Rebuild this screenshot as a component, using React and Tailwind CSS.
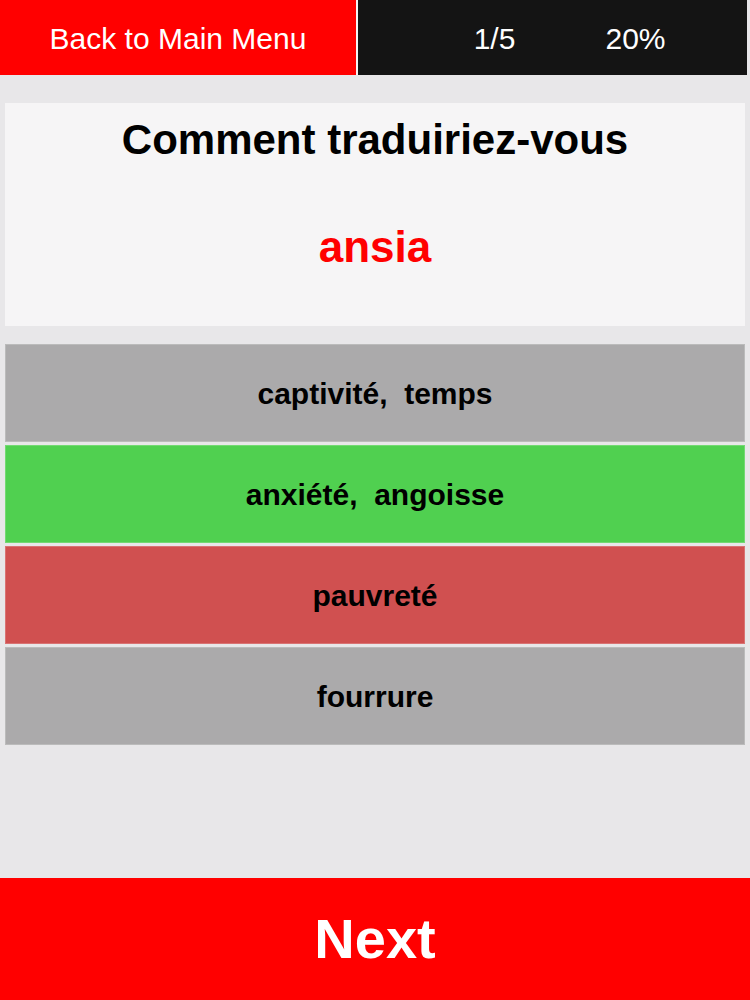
import React from 'react';

const options = [
    { label: 'captivité,  temps', color: 'bg-[#abaaab]' },
    { label: 'anxiété,  angoisse', color: 'bg-[#50d050]' },
    { label: 'pauvreté', color: 'bg-[#d05050]' },
    { label: 'fourrure', color: 'bg-[#abaaab]' },
];

export default function App() {
    return (
        <div className="w-[750px] h-[1000px] bg-[#e8e7e9] flex flex-col font-['Liberation_Sans',Arial,sans-serif]">
            {/* top bar */}
            <div className="h-[75px] flex shrink-0">
                <div className="w-[356px] bg-[#ff0000] flex items-center justify-center text-white text-[30px] pt-[2px]">
                    Back to Main Menu
                </div>
                <div className="w-[2px] bg-[#f4f4f4]" />
                <div className="w-[389px] bg-[#141414] flex items-center pl-[66px] pt-[2px] text-white text-[30px]">
                    <span className="w-[141px] text-center">1/5</span>
                    <span className="w-[141px] text-center">20%</span>
                </div>
            </div>

            {/* question */}
            <div className="mt-[28px] mx-[5px] h-[223px] bg-[#f6f5f6] flex flex-col items-center">
                <div className="mt-[13px] text-[42px] font-bold text-black leading-[48px]">Comment traduiriez-vous</div>
                <div className="mt-[58px] text-[44px] font-bold text-[#ff0000] leading-[50px]">ansia</div>
            </div>

            {/* answers */}
            <div className="mt-[18px] mx-[5px] flex flex-col gap-[3px]">
                {options.map((o, i) => (
                    <div
                        key={i}
                        className={`h-[98px] ${o.color} border border-white/20 flex items-center justify-center text-black text-[30px] font-bold whitespace-pre`}
                    >
                        {o.label}
                    </div>
                ))}
            </div>

            <div className="flex-1" />

            {/* next */}
            <div className="h-[122px] bg-[#ff0000] flex items-center justify-center text-white text-[56px] font-bold shrink-0">
                Next
            </div>
        </div>
    );
}
